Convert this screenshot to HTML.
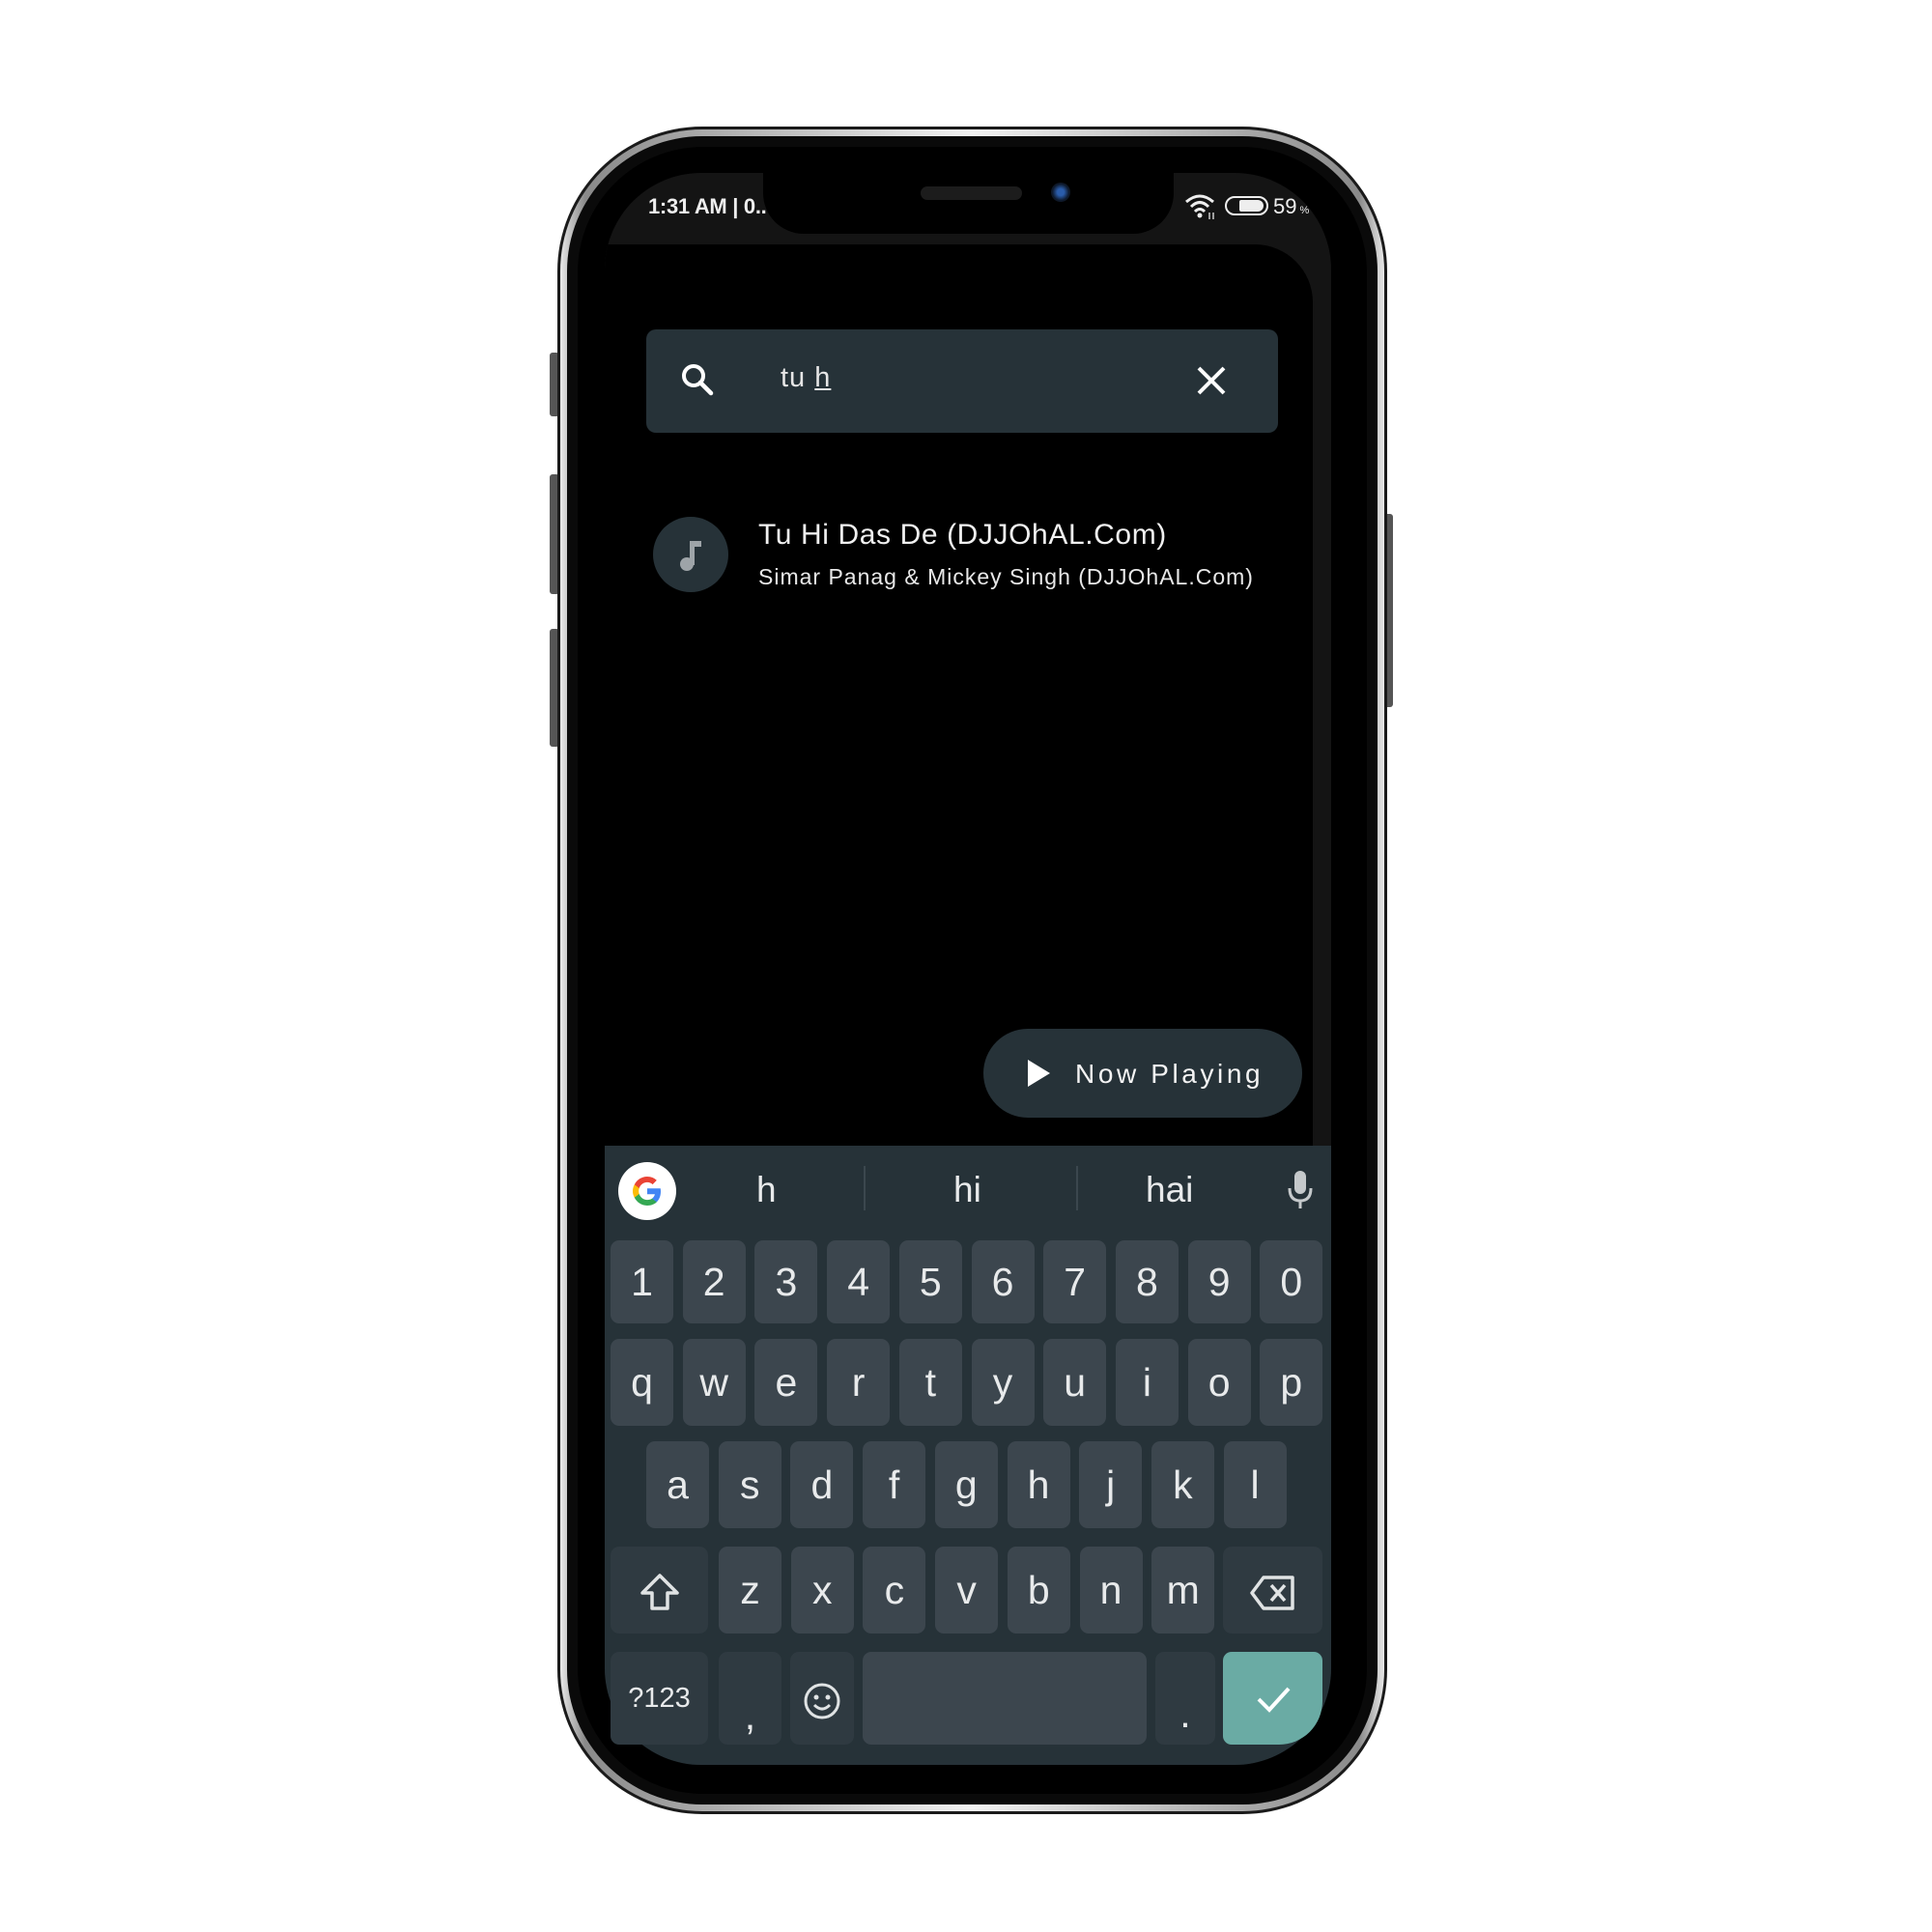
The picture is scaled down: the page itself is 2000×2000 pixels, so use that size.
<!DOCTYPE html>
<html><head><meta charset="utf-8"><style>
*{margin:0;padding:0;box-sizing:border-box}
body{width:2000px;height:2000px;background:#fff;position:relative;overflow:hidden;font-family:"Liberation Sans",sans-serif}
.abs{position:absolute}
.key{position:absolute;background:#3c464e;border-radius:9px;color:#e8eaeb;font-size:41px;text-align:center;font-family:"Liberation Sans",sans-serif}
.fn{background:#2f3a41}
</style></head><body>
<div class="abs" style="left:569px;top:365px;width:10px;height:66px;background:#555;border-radius:3px"></div>
<div class="abs" style="left:569px;top:491px;width:10px;height:124px;background:#555;border-radius:3px"></div>
<div class="abs" style="left:569px;top:651px;width:10px;height:122px;background:#555;border-radius:3px"></div>
<div class="abs" style="left:1433px;top:532px;width:9px;height:200px;background:#555;border-radius:3px"></div>
<div class="abs" style="left:577px;top:131px;width:859px;height:1747px;border-radius:150px;background:#1a1a1a"></div>
<div class="abs" style="left:580px;top:134px;width:853px;height:1741px;border-radius:147px;background:linear-gradient(90deg,#e8e8e8,#8a8a8a 3%,#f2f2f2 50%,#8a8a8a 97%,#e8e8e8)"></div>
<div class="abs" style="left:587px;top:141px;width:839px;height:1727px;border-radius:140px;background:#0a0a0a"></div>
<div class="abs" style="left:598px;top:152px;width:817px;height:1705px;border-radius:130px;background:#000"></div>
<div class="abs" style="left:626px;top:179px;width:752px;height:1648px;border-radius:100px;background:#141414;overflow:hidden">
  <div class="abs" style="left:0;top:74px;width:733px;height:940px;background:#000;border-top-right-radius:60px"></div>
  <div class="abs" style="left:0;top:1007px;width:752px;height:650px;background:#263238"></div>
</div>
<div class="abs" style="left:790px;top:160px;width:425px;height:82px;background:#000;border-radius:0 0 42px 42px"></div>
<div class="abs" style="left:953px;top:193px;width:105px;height:14px;background:#1c1c1c;border-radius:7px"></div>
<div class="abs" style="left:1088px;top:189px;width:20px;height:20px;background:radial-gradient(circle,#2a5caa 25%,#0e1a2e 60%,#111 100%);border-radius:50%"></div>
<div class="abs" style="left:671px;top:201px;color:#eee;font-weight:bold;font-size:22px;letter-spacing:-0.3px">1:31 AM | 0..</div>
<svg class="abs" style="left:1226px;top:200px" width="34" height="28" viewBox="0 0 34 28"><path d="M2 9 Q16 -3 30 9" stroke="#eee" stroke-width="3" fill="none"/><path d="M7 14 Q16 5 25 14" stroke="#eee" stroke-width="3" fill="none"/><path d="M11 19 Q16 14 21 19" stroke="#eee" stroke-width="3" fill="none"/><circle cx="16" cy="23" r="2.5" fill="#eee"/><path d="M26 20v7M30 20v7" stroke="#ccc" stroke-width="1.5"/></svg>
<div class="abs" style="left:1268px;top:203px;width:45px;height:20px;border:2.5px solid #eee;border-radius:10px"></div>
<div class="abs" style="left:1283px;top:207px;width:25px;height:12px;background:#eee;border-radius:2px 6px 6px 2px"></div>
<div class="abs" style="left:1318px;top:201px;color:#eee;font-size:22px">59<span style="font-size:11px"> %</span></div>
<div class="abs" style="left:669px;top:341px;width:654px;height:107px;background:#263238;border-radius:10px"></div>
<svg class="abs" style="left:703px;top:374px" width="40" height="40" viewBox="0 0 40 40"><circle cx="15" cy="15" r="10" stroke="#fff" stroke-width="4" fill="none"/><path d="M22 22 L33 33" stroke="#fff" stroke-width="4.5" stroke-linecap="round"/></svg>
<div class="abs" style="left:808px;top:375px;color:#e6e6e6;font-size:29px;letter-spacing:1px">tu <span style="text-decoration:underline">h</span></div>
<svg class="abs" style="left:1238px;top:378px" width="32" height="32" viewBox="0 0 32 32"><path d="M3 3 L29 29 M29 3 L3 29" stroke="#fff" stroke-width="4"/></svg>
<div class="abs" style="left:676px;top:535px;width:78px;height:78px;border-radius:50%;background:#263238"></div>
<svg class="abs" style="left:695px;top:555px" width="40" height="40" viewBox="0 0 40 40"><rect x="19" y="5" width="5" height="25" fill="#9ea4a8"/><rect x="19" y="5" width="12" height="6" fill="#9ea4a8"/><circle cx="16" cy="29" r="7" fill="#9ea4a8"/></svg>
<div class="abs" style="left:785px;top:537px;color:#f0f0f0;font-size:30px;letter-spacing:0.6px">Tu Hi Das De (DJJOhAL.Com)</div>
<div class="abs" style="left:785px;top:584px;color:#e8e8e8;font-size:23px;letter-spacing:1px">Simar Panag &amp; Mickey Singh (DJJOhAL.Com)</div>
<div class="abs" style="left:1018px;top:1065px;width:330px;height:92px;border-radius:46px;background:#263238"></div>
<svg class="abs" style="left:1063px;top:1096px" width="26" height="30" viewBox="0 0 26 30"><path d="M1 1 L24 15 L1 29Z" fill="#fff"/></svg>
<div class="abs" style="left:1113px;top:1096px;color:#f4f4f4;font-size:28px;letter-spacing:3.6px">Now Playing</div>
<div class="abs" style="left:640px;top:1203px;width:60px;height:60px;border-radius:50%;background:#fff"></div>
<svg class="abs" style="left:650px;top:1213px" width="40" height="40" viewBox="0 0 40 40"><path d="M34 20.4c0-1.1-.1-2.1-.3-3.1H20v5.9h7.9c-.4 1.9-1.4 3.4-3 4.5v3.7h4.8c2.8-2.6 4.3-6.4 4.300-11z" fill="#4285F4"/><path d="M20 35c4 0 7.4-1.3 9.8-3.6L25 27.7c-1.3.9-3 1.4-5 1.4-3.9 0-7.1-2.6-8.3-6.1H6.8v3.8C9.2 31.6 14.2 35 20 35z" fill="#34A853"/><path d="M11.7 23c-.3-.9-.5-1.9-.5-3s.2-2.1.5-3v-3.8H6.8C5.7 15.2 5 17.5 5 20s.7 4.8 1.8 6.8z" fill="#FBBC05"/><path d="M20 10.9c2.2 0 4.1.8 5.6 2.2l4.2-4.2C27.4 6.5 24 5 20 5 14.2 5 9.2 8.4 6.8 13.2l4.9 3.8c1.2-3.5 4.4-6.1 8.3-6.1z" fill="#EA4335"/></svg>
<div class="abs" style="left:783px;top:1211px;color:#e8eaeb;font-size:37px">h</div>
<div class="abs" style="left:987px;top:1211px;color:#e8eaeb;font-size:37px">hi</div>
<div class="abs" style="left:1186px;top:1211px;color:#e8eaeb;font-size:37px">hai</div>
<div class="abs" style="left:894px;top:1207px;width:2px;height:46px;background:#3b474e"></div>
<div class="abs" style="left:1114px;top:1207px;width:2px;height:46px;background:#3b474e"></div>
<svg class="abs" style="left:1330px;top:1210px" width="32" height="46" viewBox="0 0 32 46"><rect x="10" y="2" width="12" height="24" rx="6" fill="#c5c9cb"/><path d="M5 20 Q5 33 16 33 Q27 33 27 20" stroke="#c5c9cb" stroke-width="3" fill="none"/><path d="M16 33v8" stroke="#c5c9cb" stroke-width="3"/></svg>
<div id="keys"></div>
<script>
var h='';
function k(x,y,w,hh,t,c,fs){h+='<div class="key '+(c||'')+'" style="left:'+x+'px;top:'+y+'px;width:'+w+'px;height:'+hh+'px;line-height:'+hh+'px;'+(fs?'font-size:'+fs+'px;':'')+'">'+t+'</div>';}
var s=74.7,w=65;
'1234567890'.split('').forEach(function(c,i){k(632+i*s,1284,w,86,c)});
'qwertyuiop'.split('').forEach(function(c,i){k(632+i*s,1386,w,90,c)});
'asdfghjkl'.split('').forEach(function(c,i){k(669+i*s,1492,w,90,c)});
'zxcvbnm'.split('').forEach(function(c,i){k(744+i*s,1601,w,90,c)});
k(632,1601,101,90,'<svg width="48" height="44" viewBox="0 0 48 44" style="vertical-align:middle"><path d="M24 4 L42 22 H32 V38 H16 V22 H6Z" stroke="#e0e3e4" stroke-width="3.5" fill="none" stroke-linejoin="round"/></svg>','fn');
k(1266,1601,103,90,'<svg width="52" height="40" viewBox="0 0 52 40" style="vertical-align:middle"><path d="M16 4 H46 V36 H16 L4 20Z" stroke="#e0e3e4" stroke-width="3.5" fill="none" stroke-linejoin="round"/><path d="M24 12 L38 28 M38 12 L24 28" stroke="#e0e3e4" stroke-width="3.5"/></svg>','fn');
k(632,1710,101,96,'?123','fn',29);
k(744,1710,65,96,'<span style="position:relative;top:18px">,</span>','fn');
k(818,1710,66,96,'<svg width="42" height="42" viewBox="0 0 42 42" style="vertical-align:middle"><circle cx="21" cy="21" r="17" stroke="#e0e3e4" stroke-width="3" fill="none"/><circle cx="15" cy="17" r="2.5" fill="#e0e3e4"/><circle cx="27" cy="17" r="2.5" fill="#e0e3e4"/><path d="M13 25 Q21 33 29 25" stroke="#e0e3e4" stroke-width="3" fill="none"/></svg>','fn');
k(893,1710,294,96,'');
k(1196,1710,62,96,'<span style="position:relative;top:16px">.</span>','fn');
h+='<div class="abs" style="left:1266px;top:1710px;width:103px;height:96px;background:#6aaba4;border-radius:9px 9px 45px 9px"><svg width="103" height="96" viewBox="0 0 103 96"><path d="M37 49 L48 60 L68 38" stroke="#fff" stroke-width="4" fill="none"/></svg></div>';
document.getElementById('keys').innerHTML=h;
</script>
</body></html>
